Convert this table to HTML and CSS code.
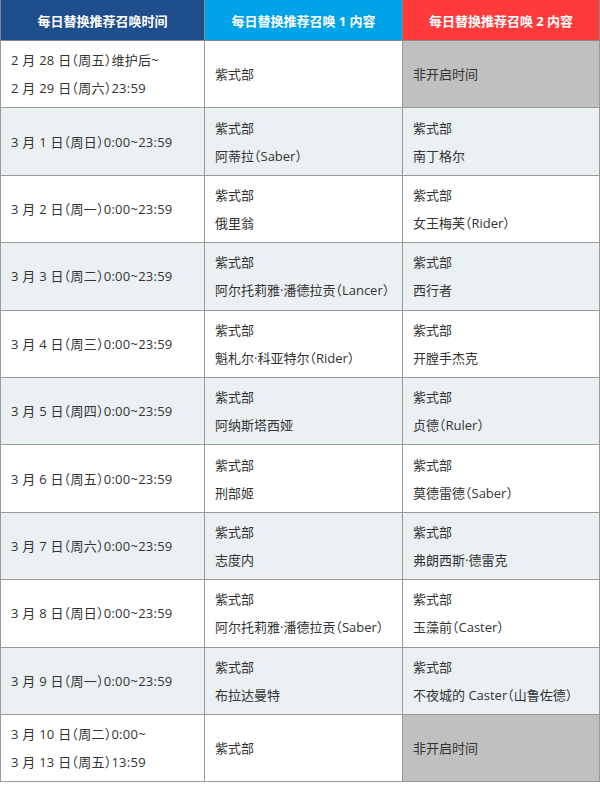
FILE: index.html
```html
<!DOCTYPE html>
<html lang="zh">
<head>
<meta charset="utf-8">
<link rel="stylesheet" href="styles.css">
</head>
<body>
<table class="sched">
  <colgroup>
    <col class="c1"><col class="c2"><col class="c3">
  </colgroup>
  <thead>
    <tr>
      <th class="h1">每日替换推荐召唤时间</th>
      <th class="h2">每日替换推荐召唤 1 内容</th>
      <th class="h3">每日替换推荐召唤 2 内容</th>
    </tr>
  </thead>
  <tbody>
    <tr>
      <td class="when"><p>2 月 28 日（周五）维护后~</p><p>2 月 29 日（周六）23:59</p></td>
      <td><p>紫式部</p></td>
      <td class="off"><p>非开启时间</p></td>
    </tr>
    <tr class="alt">
      <td class="when"><p>3 月 1 日（周日）0:00~23:59</p></td>
      <td><p>紫式部</p><p>阿蒂拉（Saber）</p></td>
      <td><p>紫式部</p><p>南丁格尔</p></td>
    </tr>
    <tr>
      <td class="when"><p>3 月 2 日（周一）0:00~23:59</p></td>
      <td><p>紫式部</p><p>俄里翁</p></td>
      <td><p>紫式部</p><p>女王梅芙（Rider）</p></td>
    </tr>
    <tr class="alt">
      <td class="when"><p>3 月 3 日（周二）0:00~23:59</p></td>
      <td><p>紫式部</p><p>阿尔托莉雅·潘德拉贡（Lancer）</p></td>
      <td><p>紫式部</p><p>西行者</p></td>
    </tr>
    <tr>
      <td class="when"><p>3 月 4 日（周三）0:00~23:59</p></td>
      <td><p>紫式部</p><p>魁札尔·科亚特尔（Rider）</p></td>
      <td><p>紫式部</p><p>开膛手杰克</p></td>
    </tr>
    <tr class="alt">
      <td class="when"><p>3 月 5 日（周四）0:00~23:59</p></td>
      <td><p>紫式部</p><p>阿纳斯塔西娅</p></td>
      <td><p>紫式部</p><p>贞德（Ruler）</p></td>
    </tr>
    <tr>
      <td class="when"><p>3 月 6 日（周五）0:00~23:59</p></td>
      <td><p>紫式部</p><p>刑部姬</p></td>
      <td><p>紫式部</p><p>莫德雷德（Saber）</p></td>
    </tr>
    <tr class="alt">
      <td class="when"><p>3 月 7 日（周六）0:00~23:59</p></td>
      <td><p>紫式部</p><p>志度内</p></td>
      <td><p>紫式部</p><p>弗朗西斯·德雷克</p></td>
    </tr>
    <tr>
      <td class="when"><p>3 月 8 日（周日）0:00~23:59</p></td>
      <td><p>紫式部</p><p>阿尔托莉雅·潘德拉贡（Saber）</p></td>
      <td><p>紫式部</p><p>玉藻前（Caster）</p></td>
    </tr>
    <tr class="alt">
      <td class="when"><p>3 月 9 日（周一）0:00~23:59</p></td>
      <td><p>紫式部</p><p>布拉达曼特</p></td>
      <td><p>紫式部</p><p>不夜城的 Caster（山鲁佐德）</p></td>
    </tr>
    <tr>
      <td class="when"><p>3 月 10 日（周二）0:00~</p><p>3 月 13 日（周五）13:59</p></td>
      <td><p>紫式部</p></td>
      <td class="off"><p>非开启时间</p></td>
    </tr>
  </tbody>
</table>
</body>
</html>
```
FILE: styles.css
```css
html, body {
  margin: 0;
  padding: 0;
  background: #ffffff;
}
.sched {
  border-collapse: collapse;
  table-layout: fixed;
  width: 599px;
  font-family: "Open Sans", "Noto Sans CJK SC", sans-serif;
  font-feature-settings: "halt";
  font-size: 13px;
  color: #333333;
}
.c1 { width: 204px; }
.c2 { width: 198px; }
.c3 { width: 197px; }
.sched th {
  height: 40px;
  padding: 0;
  color: #ffffff;
  font-weight: bold;
  text-align: center;
  border: 1px solid #8a8a8a;
  border-top: 0;
}
.h1 { background: #1f4e8c; }
.h2 { background: #00a2e8; }
.h3 { background: #fe3a3a; }
.sched td {
  height: 66.4px;
  padding: 0 0 0 10px;
  border: 1px solid #999999;
  vertical-align: middle;
}
.sched td p {
  margin: 0;
  line-height: 28px;
  white-space: nowrap;
}
.sched td.when { letter-spacing: 0.25px; }
.alt td { background: #ebf0f3; }
.sched td.off { background: #c0c0c0; }
```
